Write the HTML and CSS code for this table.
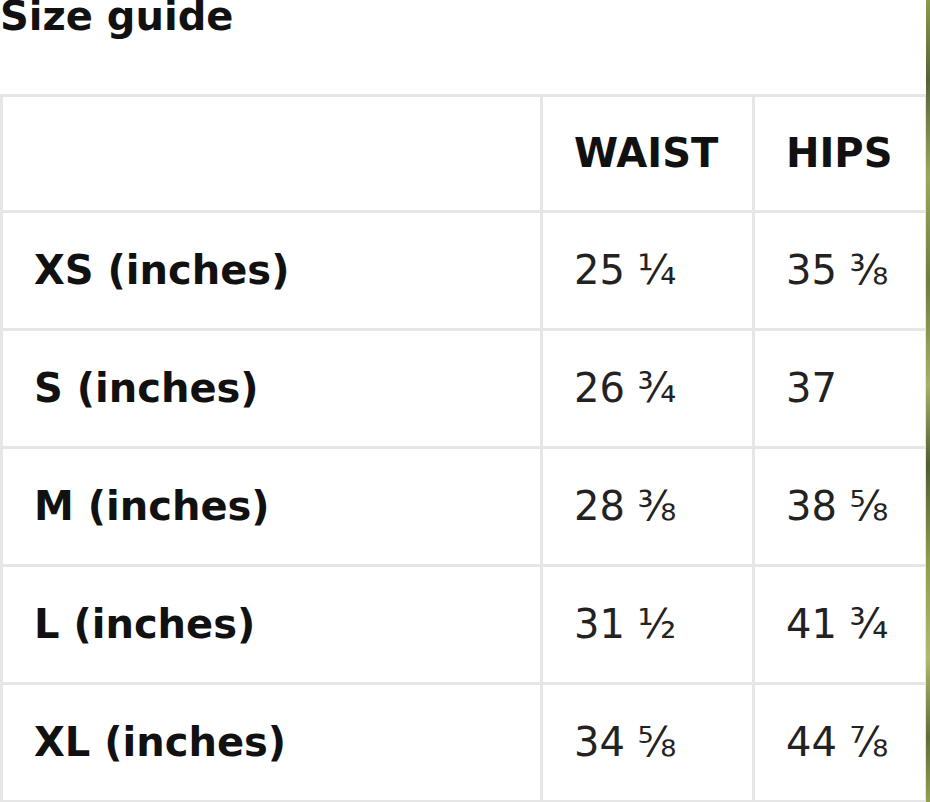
FILE: index.html
```html
<!DOCTYPE html>
<html lang="en">
<head>
<meta charset="utf-8">
<title>Size guide</title>
<link rel="stylesheet" href="styles.css">
</head>
<body>
<div class="page">
  <main class="content">
    <h1 class="title">Size guide</h1>
    <table class="sizes">
      <colgroup>
        <col class="c-size">
        <col class="c-waist">
        <col class="c-hips">
      </colgroup>
      <thead>
        <tr>
          <th></th>
          <th>WAIST</th>
          <th>HIPS</th>
        </tr>
      </thead>
      <tbody>
        <tr><th>XS (inches)</th><td>25 ¼</td><td>35 ⅜</td></tr>
        <tr><th>S (inches)</th><td>26 ¾</td><td>37</td></tr>
        <tr><th>M (inches)</th><td>28 ⅜</td><td>38 ⅝</td></tr>
        <tr><th>L (inches)</th><td>31 ½</td><td>41 ¾</td></tr>
        <tr><th>XL (inches)</th><td>34 ⅝</td><td>44 ⅞</td></tr>
      </tbody>
    </table>
  </main>
  <div class="edge"></div>
</div>
</body>
</html>
```

FILE: styles.css
```css
html, body {
  margin: 0;
  padding: 0;
  background: #ffffff;
}

body {
  font-family: "DejaVu Sans", "Liberation Sans", sans-serif;
  color: #111111;
  overflow: hidden;
}

.page {
  display: flex;
  width: 930px;
  height: 802px;
  overflow: hidden;
}

.content {
  width: 926px;
  flex: none;
}

.edge {
  flex: 1;
  background: linear-gradient(180deg, #8a9a4a 0%, #56633a 10%, #9aa85e 22%, #6d7d3e 35%, #a7b06a 48%, #4f5e33 58%, #8f9d4f 70%, #b0b870 82%, #5f6e38 92%, #93a052 100%);
}

.title {
  margin: 0 0 61px 0;
  font-size: 40px;
  line-height: 33px;
  font-weight: bold;
  color: #111111;
}

.sizes {
  border-collapse: collapse;
  table-layout: fixed;
  width: 925px;
  font-size: 40px;
}

.c-size { width: 540px; }
.c-waist { width: 212px; }
.c-hips { width: 173px; }

.sizes th,
.sizes td {
  border: 3px solid #e6e6e6;
  padding: 32px 31px;
  line-height: 51px;
  text-align: left;
  white-space: nowrap;
}

.sizes thead th {
  padding-top: 31px;
  padding-bottom: 31px;
  font-weight: bold;
  color: #111111;
}

.sizes tbody th {
  font-weight: bold;
  color: #111111;
}

.sizes td {
  font-weight: normal;
  color: #222222;
}
```
